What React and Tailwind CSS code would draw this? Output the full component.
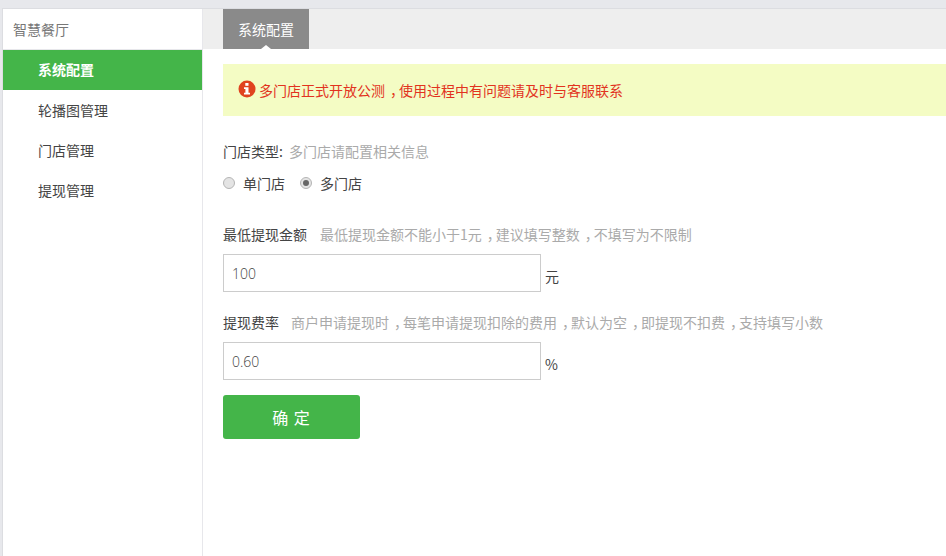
import React from 'react';

const menu = ['轮播图管理', '门店管理', '提现管理'];

// the reference draws the full-width comma in the middle of its cell
const Text = ({ children }) =>
    children.split('，').map((part, i) => (
        <React.Fragment key={i}>
            {i > 0 && <span className="pl-[5px] tracking-[-5px]">，</span>}
            {part}
        </React.Fragment>
    ));

const Radio = ({ checked, label }) => (
    <label className="flex items-center gap-2">
        <span className="w-3 h-3 -mt-px rounded-full border border-[#b5b5b5] bg-[#e4e4e4] flex items-center justify-center">
            {checked && <span className="w-1.5 h-1.5 rounded-full bg-[#666]" />}
        </span>
        <span className="leading-5 text-[#444]">{label}</span>
    </label>
);

const App = () => {
    return (
        <div className="h-[556px] w-[946px] overflow-hidden bg-[#e7e8ec] pt-[8px] pl-[2px] text-sm text-[#444] font-['Noto_Sans_CJK_SC','Noto_Sans',sans-serif]">
            <div className="h-full flex bg-white border-t border-l border-[#dcdde1]">
                {/* Sidebar */}
                <div className="w-[200px] shrink-0 border-r border-[#e7e7eb]">
                    <div className="h-[41px] pl-[10px] flex items-center text-[#777] border-b border-[#e7e7eb]">智慧餐厅</div>
                    <div className="h-[40px] pl-[35px] pb-[2px] flex items-center bg-[#44b549] text-white font-bold">系统配置</div>
                    {menu.map(item => (
                        <div key={item} className="h-[40px] pl-[35px] flex items-center text-[#444]">{item}</div>
                    ))}
                </div>

                {/* Content */}
                <div className="flex-1 min-w-0">
                    <div className="h-[40px] bg-[#eeeeee] pl-[20px]">
                        <div className="relative w-[86px] h-[40px] bg-[#8a8a8a] text-white flex items-center justify-center">
                            系统配置
                            <span className="absolute bottom-0 left-[38px] w-0 h-0 border-x-[5px] border-x-transparent border-b-[4px] border-b-white" />
                        </div>
                    </div>

                    <div className="pl-[20px]">
                        <div className="mt-[15px] h-[52px] bg-[#f4fcc4] pl-[15px] pr-4 flex items-center gap-[3px] text-[#e2331e]">
                            <svg width="18" height="18" viewBox="0 0 18 18" className="shrink-0 -mt-[3px]">
                                <circle cx="9" cy="9" r="8.5" fill="#e0431f" />
                                <rect x="7.3" y="3" width="3.2" height="2.8" fill="#fff" />
                                <path d="M6 7.2h4.5v5.6H12v1.7H6v-1.7h1.4V8.9H6z" fill="#fff" />
                            </svg>
                            <span><Text>多门店正式开放公测，使用过程中有问题请及时与客服联系</Text></span>
                        </div>

                        <div className="mt-[25px] leading-5">
                            <span className="text-[#444]">门店类型:</span>
                            <span className="ml-[6px] text-[#aaa]">多门店请配置相关信息</span>
                        </div>
                        <div className="mt-[12px] flex gap-[15px]">
                            <Radio label="单门店" />
                            <Radio label="多门店" checked />
                        </div>

                        <div className="mt-[31px] leading-5">
                            <span className="text-[#444]">最低提现金额</span>
                            <span className="ml-[13px] text-[#aaa]"><Text>最低提现金额不能小于1元，建议填写整数，不填写为不限制</Text></span>
                        </div>
                        <div className="mt-[10px] flex items-end gap-[4px]">
                            <input readOnly value="100" className="w-[318px] h-[38px] border border-[#ccc] px-[8px] text-sm font-light font-['Open_Sans',sans-serif] text-[#444] outline-none" />
                            <span className="mb-[6px] leading-5 text-[#444]">元</span>
                        </div>

                        <div className="mt-[20px] leading-5">
                            <span className="text-[#444]">提现费率</span>
                            <span className="ml-[12px] text-[#aaa]"><Text>商户申请提现时，每笔申请提现扣除的费用，默认为空，即提现不扣费，支持填写小数</Text></span>
                        </div>
                        <div className="mt-[10px] flex items-end gap-[4px]">
                            <input readOnly value="0.60" className="w-[318px] h-[38px] border border-[#ccc] px-[8px] text-sm font-light font-['Open_Sans',sans-serif] text-[#444] outline-none" />
                            <span className="mb-[6px] leading-5 text-[#444]">%</span>
                        </div>

                        <button className="mt-[15px] w-[137px] h-[44px] bg-[#44b549] rounded-[3px] text-white text-base tracking-[1px]">确 定</button>
                    </div>
                </div>
            </div>
        </div>
    );
};

export default App;
